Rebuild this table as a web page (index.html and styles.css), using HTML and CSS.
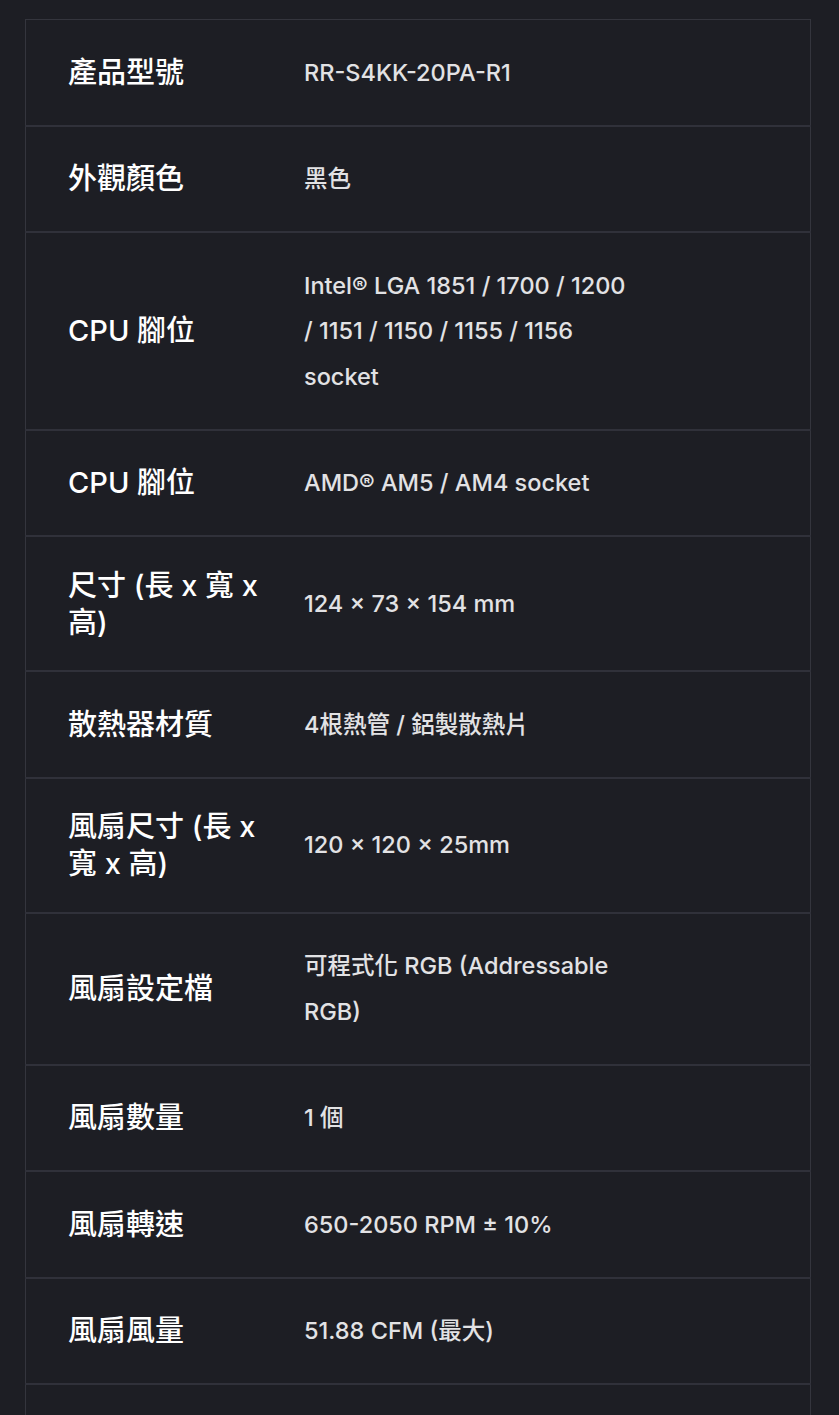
FILE: index.html
```html
<!DOCTYPE html>
<html lang="zh-Hant">
<head>
<meta charset="utf-8">
<link rel="stylesheet" href="styles.css">
</head>
<body>
<table class="spec">
<tbody>
<tr><th>產品型號</th><td>RR-S4KK-20PA-R1</td></tr>
<tr><th>外觀顏色</th><td>黑色</td></tr>
<tr><th>CPU 腳位</th><td>Intel® LGA 1851 / 1700 / 1200 / 1151 / 1150 / 1155 / 1156 socket</td></tr>
<tr><th>CPU 腳位</th><td>AMD® AM5 / AM4 socket</td></tr>
<tr><th>尺寸 (長 x 寬 x 高)</th><td>124 × 73 × 154 mm</td></tr>
<tr><th>散熱器材質</th><td>4根熱管 / 鋁製散熱片</td></tr>
<tr><th>風扇尺寸 (長 x 寬 x 高)</th><td>120 × 120 × 25mm</td></tr>
<tr><th>風扇設定檔</th><td>可程式化 RGB (Addressable RGB)</td></tr>
<tr><th>風扇數量</th><td>1 個</td></tr>
<tr><th>風扇轉速</th><td>650-2050 RPM ± 10%</td></tr>
<tr><th>風扇風量</th><td>51.88 CFM (最大)</td></tr>
<tr><th>風扇風壓</th><td>2.34 mmH2O (最大)</td></tr>
</tbody>
</table>
</body>
</html>
```
FILE: styles.css
```css
html, body {
  margin: 0;
  background: #1d1e24;
}
body {
  padding: 19px 28px 0 25px;
  font-family: Inter, "Noto Sans CJK TC", sans-serif;
}
.spec {
  width: 786px;
  border-collapse: collapse;
  border: 1px solid #34353d;
}
.spec tr {
  border-bottom: 2px solid #30313a;
}
.spec th {
  width: 194px;
  padding: 29.5px 42px;
  text-align: left;
  vertical-align: middle;
  color: #ffffff;
  font-size: 29px;
  font-weight: 500;
  line-height: 37px;
}
.spec td {
  padding: 29.5px 180px 29.5px 0;
  vertical-align: middle;
  color: #e2e2e4;
  font-size: 23.5px;
  font-weight: 500;
  line-height: 45.5px;
}
```
